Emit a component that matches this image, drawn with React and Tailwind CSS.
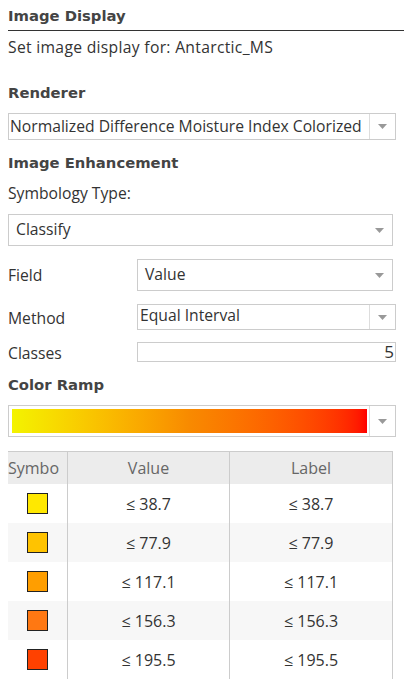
import React from 'react';

const font = { fontFamily: '"Open Sans", "DejaVu Sans", sans-serif' };
const heading = 'font-bold text-[#444] text-[14.8px] leading-[20px] font-["DejaVu_Sans",sans-serif]';

const Arrow = () => (
  <svg width="9" height="5" viewBox="0 0 9 5" className="fill-[#999]">
    <path d="M0 0h9L4.5 5z" />
  </svg>
);

const rows = [
  { color: 'bg-[#ffe800]', value: '≤ 38.7' },
  { color: 'bg-[#ffc300]', value: '≤ 77.9' },
  { color: 'bg-[#ff9e00]', value: '≤ 117.1' },
  { color: 'bg-[#ff7812]', value: '≤ 156.3' },
  { color: 'bg-[#ff4100]', value: '≤ 195.5' },
];

const App = () => {
  return (
    <div className="w-[404px] h-[685px] overflow-hidden bg-white text-[#333] text-[15.7px]" style={font}>
      <div className="pl-2">
        <h2 className={`${heading} h-[31px] !leading-[31px] border-b border-[#333]`}>
          Image Display
        </h2>
      </div>
      <div className="px-2">
        <p className="h-[32px] leading-[32px] tracking-[0.3px]">Set image display for: Antarctic_MS</p>

        <h3 className={`${heading} mt-[20px]`}>Renderer</h3>
        <div className="mt-[10px] w-[388px] h-[27px] border border-[#ccc] flex">
          <div className="flex-1 pl-[1px] leading-[25px] whitespace-nowrap overflow-hidden">
            Normalized Difference Moisture Index Colorized
          </div>
          <div className="w-[26px] border-l border-[#ddd] flex items-center justify-center">
            <Arrow />
          </div>
        </div>

        <h3 className={`${heading} mt-[13px]`}>Image Enhancement</h3>
        <p className="mt-[10px] leading-[20px]">Symbology Type:</p>

        <div className="mt-[11px] w-[385px] h-[32px] border border-[#ccc] flex items-center pl-[7px] pr-[8px]">
          <span className="flex-1">Classify</span>
          <Arrow />
        </div>

        <div className="mt-[13px] flex items-center">
          <span className="w-[129px] leading-[20px]">Field</span>
          <div className="w-[256px] h-[32px] border border-[#ccc] flex items-center pl-[7px] pr-[8px]">
            <span className="flex-1">Value</span>
            <Arrow />
          </div>
        </div>

        <div className="mt-[13px] flex items-center">
          <span className="w-[129px] pt-[2px] leading-[20px]">Method</span>
          <div className="w-[259px] h-[26px] border border-[#ccc] flex">
            <span className="flex-1 pl-[2px] leading-[20px]">Equal Interval</span>
            <div className="w-[26px] border-l border-[#ddd] flex items-center justify-center">
              <Arrow />
            </div>
          </div>
        </div>

        <div className="mt-[12px] flex items-center h-[20px]">
          <span className="w-[129px] pt-[2px] leading-[18px]">Classes</span>
          <div className="w-[259px] h-[20px] border border-[#ccc] text-right pr-[1px] text-[17px] leading-[18px]">
            5
          </div>
        </div>

        <h3 className={`${heading} mt-[13px]`}>Color Ramp</h3>
        <div className="mt-[10px] w-[388px] h-[32px] border border-[#ccc] flex">
          <div className="flex-1 p-[3px] pr-[2px]">
            <div className="h-full bg-gradient-to-r from-[#f3f300] via-[#f88a00] to-[#ff0000]" />
          </div>
          <div className="w-[26px] border-l border-[#ddd] flex items-center justify-center">
            <Arrow />
          </div>
        </div>

        <div className="mt-[14px] w-[385px] border-r border-[#ccc]">
          <div className="flex h-[33px] bg-[#ececec] border-t border-[#ccc] text-[#666] text-[16px]">
            <div className="w-[60px] flex items-center overflow-hidden whitespace-nowrap border-r border-[#ccc]">Symbo</div>
            <div className="w-[162px] flex items-center justify-center border-r border-[#ccc]">Value</div>
            <div className="flex-1 flex items-center justify-center">Label</div>
          </div>
          {rows.map((row, i) => (
            <div key={row.value} className={`flex h-[39px] ${i % 2 === 1 ? 'bg-[#f7f7f7]' : 'bg-white'} text-[16px]`}>
              <div className="w-[60px] flex items-center justify-center border-r border-[#ccc]">
                <div className={`w-[21px] h-[21px] border border-[#222] ${row.color}`} />
              </div>
              <div className="w-[162px] flex items-center justify-center border-r border-[#ccc]">{row.value}</div>
              <div className="flex-1 flex items-center justify-center">{row.value}</div>
            </div>
          ))}
        </div>
      </div>
    </div>
  );
};

export default App;
